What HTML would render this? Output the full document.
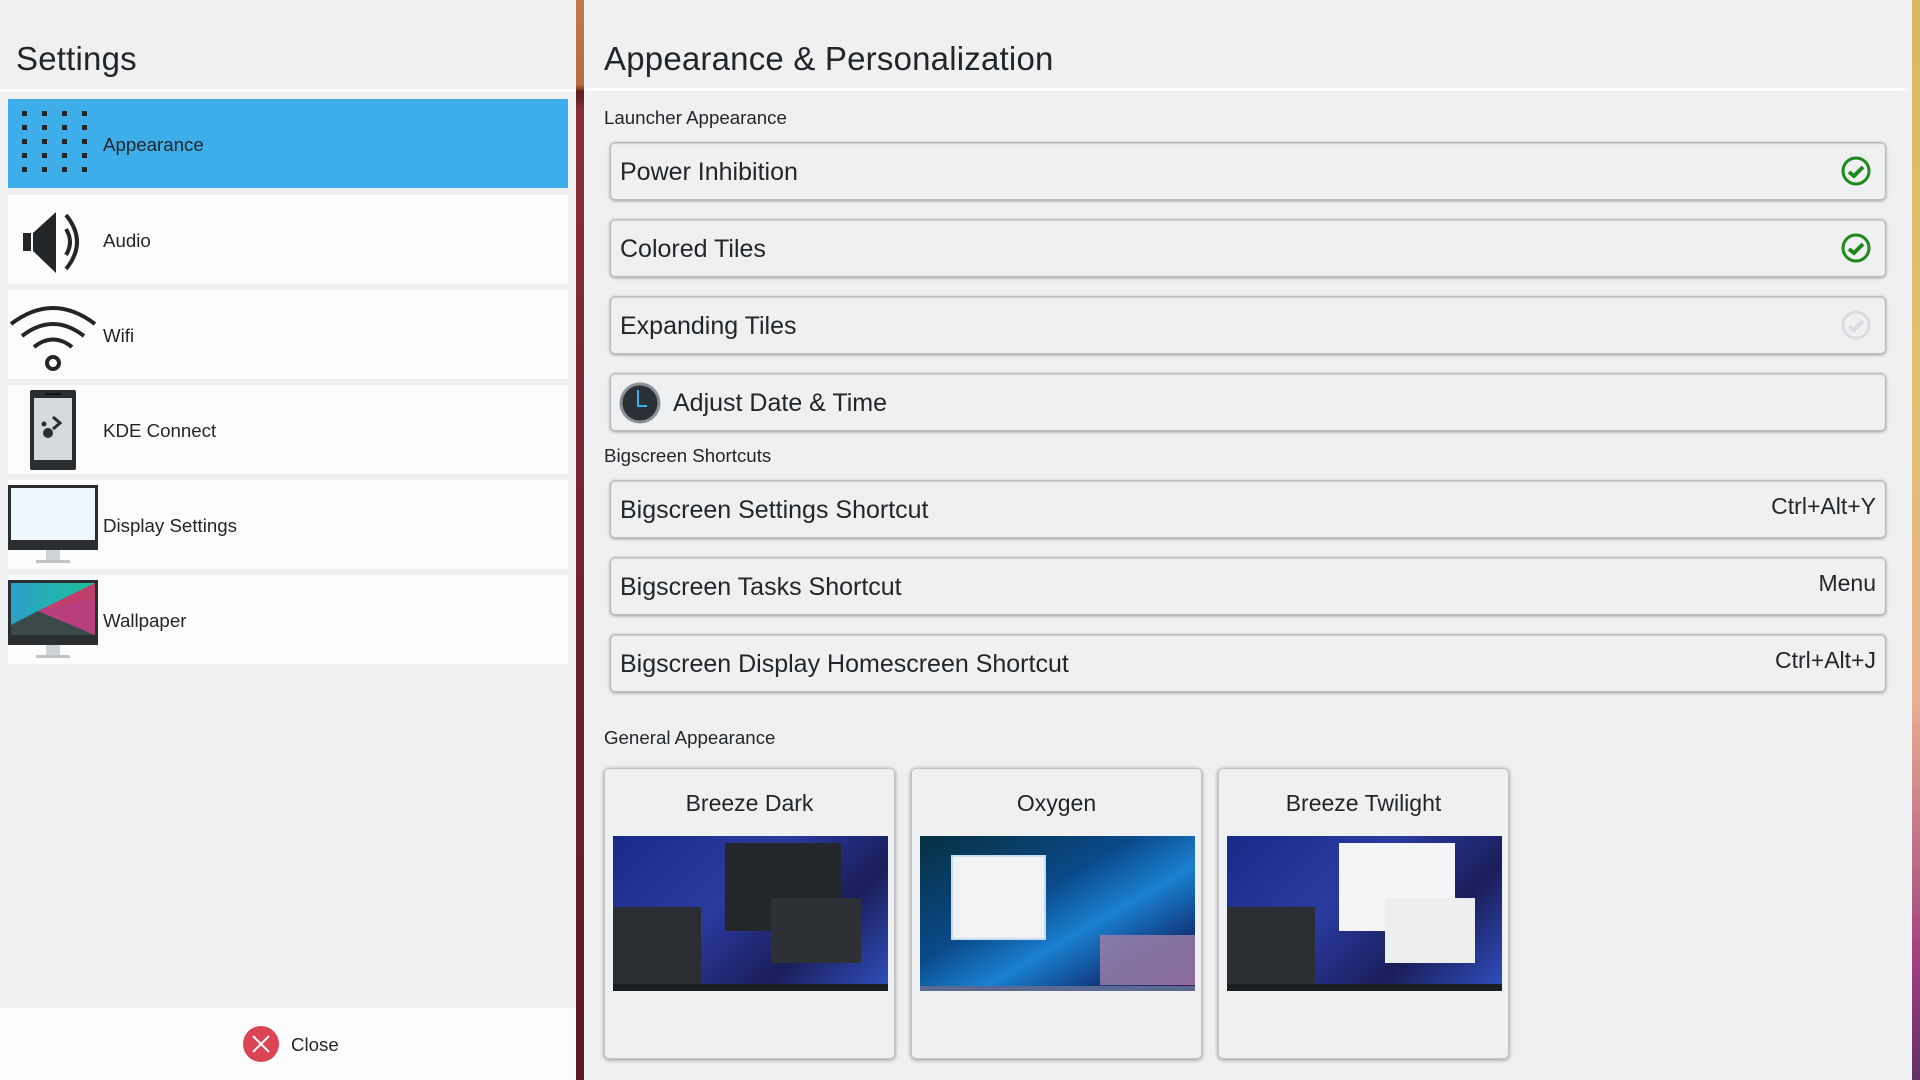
<!DOCTYPE html>
<html><head><meta charset="utf-8">
<style>
*{margin:0;padding:0;box-sizing:border-box}
body{width:1920px;height:1080px;overflow:hidden;background:#eff0f1;font-family:"Liberation Sans","DejaVu Sans",sans-serif;color:#232629;position:relative}
.abs{position:absolute}
.left{left:0;top:0;width:576px;height:1080px;background:#eff0f1}
.stripe{left:576px;top:0;width:8px;height:1080px;background:linear-gradient(#c07a4a 0,#b86a40 85px,#5a1c1c 92px,#8a2e36 110px,#6e2230 600px,#5a1a28 1080px)}
.rstripe{left:1912px;top:0;width:8px;height:1080px;background:linear-gradient(#d8b860,#e2c070 400px,#e8b090 700px,#a04080 960px,#603060)}
h1{position:absolute;font-weight:normal;font-size:33px;letter-spacing:0.2px}
.sep{height:3px;background:#fcfcfc}
.item{position:absolute;left:8px;width:560px;height:89px;background:#fcfcfd}
.item span{position:absolute;left:95px;top:1px;line-height:89px;font-size:18.7px}
.item svg{position:absolute}
.sel{background:#3daee9}
.bottom{left:0;top:1008px;width:576px;height:72px;background:#fcfcfc}
.lbl{position:absolute;left:604px;font-size:18.7px}
.row{position:absolute;left:610px;width:1276px;height:58px;background:#eff0f1;border-radius:5px;border:1px solid #b8babc;box-shadow:0 1px 3px rgba(0,0,0,.35), inset 0 1px 1px rgba(0,0,0,.15)}
.row span{position:absolute;left:9px;top:1px;line-height:56px;font-size:25px}
.row .sc{left:auto;right:9px;top:0;line-height:50px;font-size:23px}
.row svg{position:absolute;right:13px;top:12px}
.card{position:absolute;top:768px;width:291px;height:291px;background:#eff0f1;border-radius:5px;border:1px solid #c0c2c4;box-shadow:0 1px 4px rgba(0,0,0,.4)}
.card .t{position:absolute;left:0;right:0;top:21px;text-align:center;font-size:23px}
.card .img{position:absolute;left:8px;top:67px;width:275px;height:155px;overflow:hidden}
</style></head><body>
<div class="abs left"></div>
<div class="abs stripe"></div>
<div class="abs rstripe"></div>

<h1 style="left:16px;top:40px">Settings</h1>
<div class="abs sep" style="left:0;top:89px;width:576px"></div>

<div class="item sel" style="top:99px">
<svg style="left:12px;top:10px" width="70" height="70">
<g fill="#232629">
<rect x="2" y="2" width="5" height="5"/><rect x="22" y="2" width="5" height="5"/><rect x="42" y="2" width="5" height="5"/><rect x="62" y="2" width="5" height="5"/>
<rect x="2" y="16" width="5" height="5"/><rect x="22" y="16" width="5" height="5"/><rect x="42" y="16" width="5" height="5"/><rect x="62" y="16" width="5" height="5"/>
<rect x="2" y="30" width="5" height="5"/><rect x="22" y="30" width="5" height="5"/><rect x="42" y="30" width="5" height="5"/><rect x="62" y="30" width="5" height="5"/>
<rect x="2" y="44" width="5" height="5"/><rect x="22" y="44" width="5" height="5"/><rect x="42" y="44" width="5" height="5"/><rect x="62" y="44" width="5" height="5"/>
<rect x="2" y="58" width="5" height="5"/><rect x="22" y="58" width="5" height="5"/><rect x="42" y="58" width="5" height="5"/><rect x="62" y="58" width="5" height="5"/>
</g></svg>
<span>Appearance</span></div>

<div class="item" style="top:195px">
<svg style="left:12px;top:12px" width="70" height="70">
<rect x="3" y="26" width="8" height="18" fill="#232629"/>
<path d="M13 26 L36 5 V66 L13 44 Z" fill="#232629"/>
<path d="M46 22 Q54 35 46 48" stroke="#232629" stroke-width="4" fill="none"/>
<path d="M46 8 Q68 35 46 62" stroke="#232629" stroke-width="4" fill="none"/>
</svg>
<span>Audio</span></div>

<div class="item" style="top:290px">
<svg style="left:0;top:10px" width="90" height="76">
<path d="M3 24 Q45 -8 87 24" stroke="#232629" stroke-width="4" fill="none"/>
<path d="M14 36 Q45 12 76 36" stroke="#232629" stroke-width="4" fill="none"/>
<path d="M26 47 Q45 32 64 47" stroke="#232629" stroke-width="4" fill="none"/>
<circle cx="45" cy="63" r="6" stroke="#232629" stroke-width="4" fill="none"/>
</svg>
<span>Wifi</span></div>

<div class="item" style="top:385px">
<svg style="left:22px;top:5px" width="50" height="82">
<rect x="0" y="0" width="46" height="80" rx="2" fill="#2b2e31"/>
<rect x="4" y="8" width="38" height="62" fill="#d6d9dc"/>
<rect x="15" y="3" width="16" height="2" fill="#111"/>
<circle cx="18" cy="43" r="5" fill="#2b2e31"/><circle cx="14" cy="34" r="2.5" fill="#2b2e31"/>
<path d="M23 27 L30 33 L23 39" stroke="#2b2e31" stroke-width="3" fill="none"/>
</svg>
<span>KDE Connect</span></div>

<div class="item" style="top:480px">
<svg style="left:0;top:5px" width="92" height="82">
<rect x="0" y="0" width="90" height="65" fill="#2b2e31"/>
<rect x="3" y="3" width="84" height="52" fill="#eef8fc"/>
<rect x="38" y="65" width="14" height="10" fill="#cfd3d6"/><rect x="28" y="75" width="34" height="3" fill="#bfc3c6"/>
</svg>
<span>Display Settings</span></div>

<div class="item" style="top:575px">
<svg style="left:0;top:5px" width="92" height="82">
<rect x="0" y="0" width="90" height="65" fill="#2b2e31"/>
<defs><linearGradient id="g1" x1="0" y1="0" x2="1" y2="0"><stop offset="0" stop-color="#2aa0c8"/><stop offset="1" stop-color="#1ec098"/></linearGradient></defs>
<rect x="3" y="3" width="84" height="52" fill="url(#g1)"/>
<path d="M3 55 L3 45 L30 31 L87 55 Z" fill="#3a4a48"/>
<path d="M30 31 L87 3 L87 55 Z" fill="#c23e6a"/>
<path d="M30 31 L87 18 L87 55 Z" fill="#b0408a" opacity=".6"/>
<rect x="38" y="65" width="14" height="10" fill="#cfd3d6"/><rect x="28" y="75" width="34" height="3" fill="#bfc3c6"/>
</svg>
<span>Wallpaper</span></div>

<div class="abs bottom"></div>
<svg class="abs" style="left:243px;top:1026px" width="36" height="36"><circle cx="18" cy="18" r="18" fill="#da4453"/><path d="M10 10 L26 26 M26 10 L10 26" stroke="#fff" stroke-width="2"/></svg>
<div class="abs" style="left:291px;top:1034px;font-size:18.7px">Close</div>

<h1 style="left:604px;top:40px">Appearance &amp; Personalization</h1>
<div class="abs sep" style="left:585px;top:88px;width:1322px"></div>

<div class="lbl" style="top:107px">Launcher Appearance</div>
<div class="row" style="top:142px"><span>Power Inhibition</span>
<svg width="32" height="32"><circle cx="16" cy="16" r="13" stroke="#1e8a1e" stroke-width="3" fill="none"/><path d="M9 17 L14 21 L23 12" stroke="#1e8a1e" stroke-width="4" fill="none"/></svg></div>
<div class="row" style="top:219px"><span>Colored Tiles</span>
<svg width="32" height="32"><circle cx="16" cy="16" r="13" stroke="#1e8a1e" stroke-width="3" fill="none"/><path d="M9 17 L14 21 L23 12" stroke="#1e8a1e" stroke-width="4" fill="none"/></svg></div>
<div class="row" style="top:296px"><span>Expanding Tiles</span>
<svg width="32" height="32"><circle cx="16" cy="16" r="13" stroke="#dcdde0" stroke-width="3" fill="none"/><path d="M9 17 L14 21 L23 12" stroke="#dcdde0" stroke-width="4" fill="none"/></svg></div>
<div class="row" style="top:373px">
<svg style="left:8px;right:auto;top:8px" width="42" height="42"><circle cx="21" cy="21" r="19" fill="#2b3036" stroke="#8a9096" stroke-width="3"/><path d="M19 8 V24 H28" stroke="#3daee9" stroke-width="2" fill="none"/></svg>
<span style="left:62px">Adjust Date &amp; Time</span></div>

<div class="lbl" style="top:445px">Bigscreen Shortcuts</div>
<div class="row" style="top:480px"><span>Bigscreen Settings Shortcut</span><span class="sc">Ctrl+Alt+Y</span></div>
<div class="row" style="top:557px"><span>Bigscreen Tasks Shortcut</span><span class="sc">Menu</span></div>
<div class="row" style="top:634px"><span>Bigscreen Display Homescreen Shortcut</span><span class="sc">Ctrl+Alt+J</span></div>

<div class="lbl" style="top:727px">General Appearance</div>

<div class="card" style="left:604px"><div class="t">Breeze Dark</div>
<div class="img" style="background:linear-gradient(135deg,#1a2a8a,#2a3aa0 40%,#1a1e5a 70%,#3050c0)">
<div class="abs" style="left:112px;top:7px;width:116px;height:88px;background:#23262b"></div>
<div class="abs" style="left:0;top:71px;width:88px;height:77px;background:#2a2e33"></div>
<div class="abs" style="left:158px;top:62px;width:90px;height:65px;background:#2d3136"></div>
<div class="abs" style="left:0;top:148px;width:275px;height:7px;background:#1c1f22"></div>
</div></div>

<div class="card" style="left:911px"><div class="t">Oxygen</div>
<div class="img" style="background:linear-gradient(150deg,#063040,#0a4a8a 40%,#1a80d0 60%,#103a80 80%,#401a60)">
<div class="abs" style="left:31px;top:19px;width:95px;height:85px;background:#f0f2f4;border:2px solid #c8dcec"></div>
<div class="abs" style="left:180px;top:99px;width:95px;height:50px;background:#a080a8;opacity:.8"></div>
<div class="abs" style="left:0;top:150px;width:275px;height:5px;background:#5a6a90"></div>
</div></div>

<div class="card" style="left:1218px"><div class="t">Breeze Twilight</div>
<div class="img" style="background:linear-gradient(135deg,#1a2a8a,#2a3aa0 40%,#1a1e5a 70%,#3050c0)">
<div class="abs" style="left:112px;top:7px;width:116px;height:88px;background:#f4f5f6"></div>
<div class="abs" style="left:0;top:71px;width:88px;height:77px;background:#2a2e33"></div>
<div class="abs" style="left:158px;top:62px;width:90px;height:65px;background:#eceef0"></div>
<div class="abs" style="left:0;top:148px;width:275px;height:7px;background:#1c1f22"></div>
</div></div>

</body></html>
